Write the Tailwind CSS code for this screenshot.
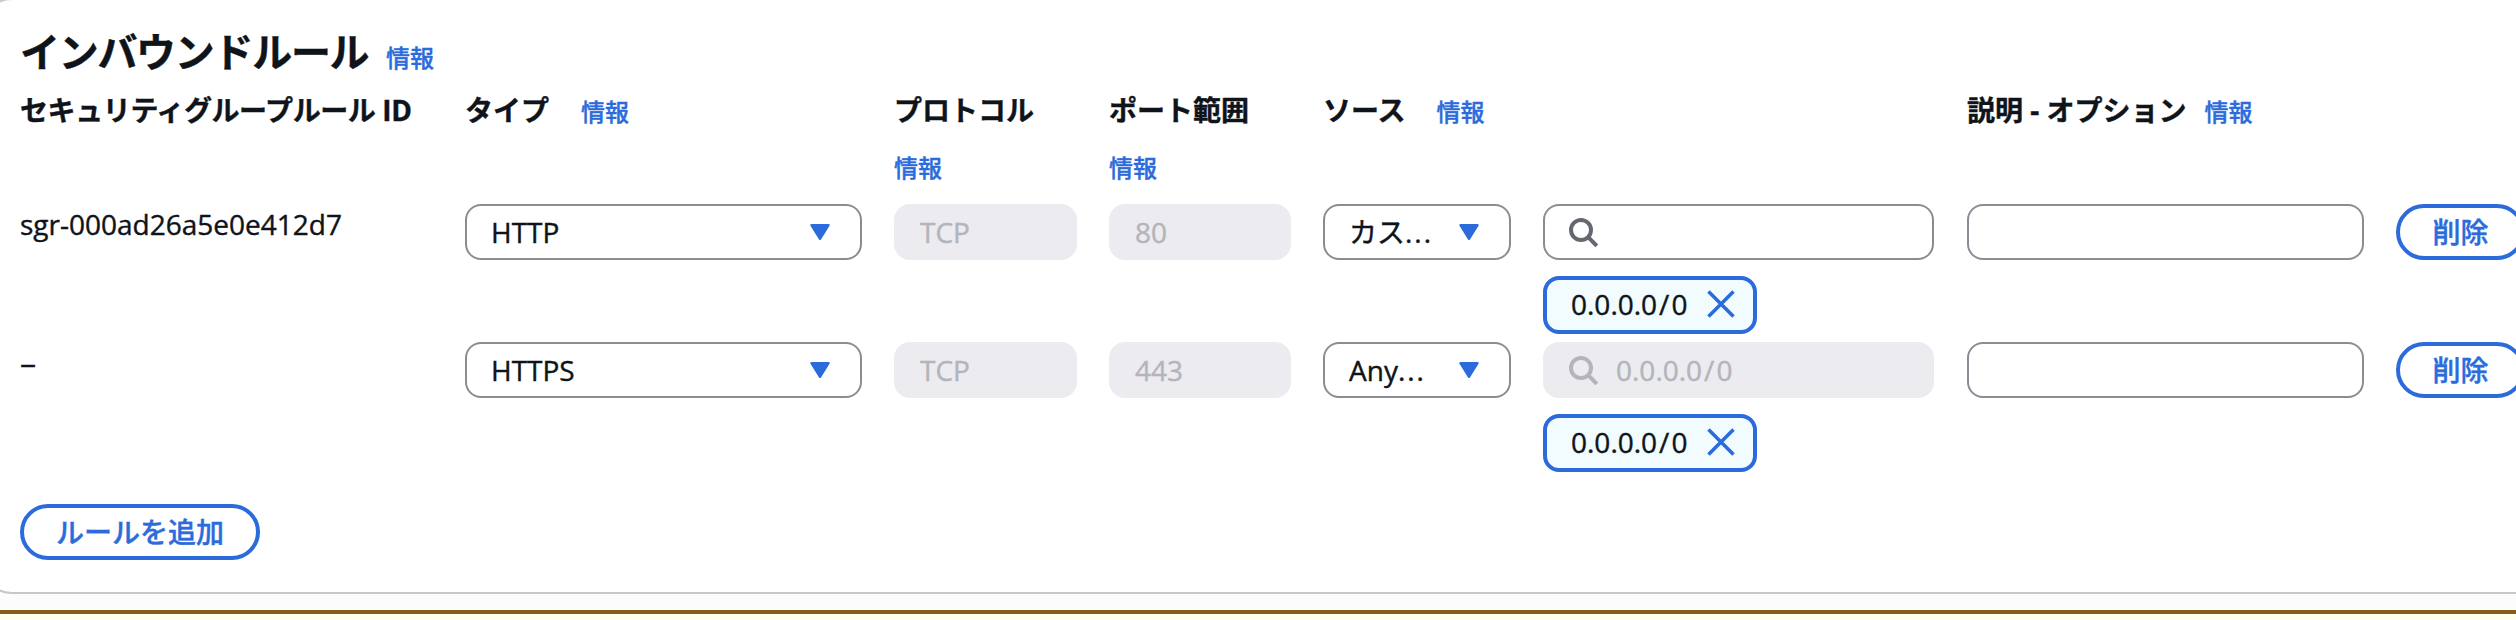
<!DOCTYPE html>
<html lang="ja">
<head>
<meta charset="utf-8">
<title>インバウンドルール</title>
<script src="https://cdn.jsdelivr.net/npm/@tailwindcss/browser@4"></script>
</head>
<body class="flex h-[620px] w-[2516px] flex-col overflow-hidden bg-[#fcfcfd] font-['Open_Sans','Noto_Sans_CJK_JP',sans-serif] text-[28px] leading-10 text-[#0f141a] [-webkit-text-stroke:0.4px]">
<svg class="hidden">
  <symbol id="caret" viewBox="0 0 20 16"><path d="M1.500 1.200h17L10 14.800z" fill="currentColor" stroke="currentColor" stroke-width="2.400" stroke-linejoin="round"/></symbol>
  <symbol id="search" viewBox="0 0 32 32"><circle cx="14" cy="14" r="10" fill="none" stroke="currentColor" stroke-width="4"/><path d="M21 21l8.800 8.800" stroke="currentColor" stroke-width="4"/></symbol>
  <symbol id="close" viewBox="0 0 28 28"><path d="M1.500 1.500l25 25M26.500 1.500l-25 25" stroke="currentColor" stroke-width="3.600"/></symbol>
</svg>
<main class="-ml-5 -mt-0.5 h-[596px] w-[2600px] shrink-0 rounded-[32px] border-2 border-[#c6c6cd] bg-white pl-[38px] pt-7">
  <header class="flex h-[50px] items-baseline gap-4">
    <h2 class="w-[350px] whitespace-nowrap text-[40px] font-bold leading-[48px] tracking-[-1.3px]">インバウンドルール</h2>
    <a class="text-2xl font-medium text-[#2b6bdb]">情報</a>
  </header>
  <div class="mt-[12px] grid h-[114px] grid-cols-[413px_397px_183px_182px_188px_392px_397px_129px] gap-8 whitespace-nowrap">
    <div class="font-bold tracking-[-0.4px]">セキュリティグループルール ID</div>
    <div class="flex items-baseline gap-8"><b>タイプ</b><a class="text-2xl font-medium text-[#2b6bdb]">情報</a></div>
    <div class="flex flex-col gap-[18px]"><b>プロトコル</b><a class="text-2xl leading-10 font-medium text-[#2b6bdb]">情報</a></div>
    <div class="flex flex-col gap-[18px]"><b>ポート範囲</b><a class="text-2xl leading-10 font-medium text-[#2b6bdb]">情報</a></div>
    <div class="flex items-baseline gap-[31px]"><b>ソース</b><a class="text-2xl font-medium text-[#2b6bdb]">情報</a></div>
    <div></div>
    <div class="flex items-baseline gap-[18px]"><b>説明 - オプション</b><a class="text-2xl font-medium text-[#2b6bdb]">情報</a></div>
  </div>
  <div class="grid h-[138px] grid-cols-[413px_397px_183px_182px_188px_392px_397px_129px] items-start gap-8 whitespace-nowrap">
    <div>sgr-000ad26a5e0e412d7</div>
    <div class="flex h-14 items-center justify-between rounded-2xl border-2 border-[#8c8c94] pl-6 pr-[30px]"><span>HTTP</span><svg class="h-4 w-5 text-[#2b6bdb]"><use href="#caret"/></svg></div>
    <div class="flex h-14 items-center rounded-2xl bg-[#ebebf0] pl-[26px] text-[#b4b4bb]">TCP</div>
    <div class="flex h-14 items-center rounded-2xl bg-[#ebebf0] pl-[26px] text-[#b4b4bb]">80</div>
    <div class="flex h-14 items-center justify-between rounded-2xl border-2 border-[#8c8c94] pl-6 pr-[30px]"><span>カス<span class="tracking-[2px]">...</span></span><svg class="h-4 w-5 text-[#2b6bdb]"><use href="#caret"/></svg></div>
    <div class="flex flex-col items-start gap-4">
      <div class="flex h-14 w-[391px] items-center rounded-2xl border-2 border-[#8c8c94] pl-[22px]"><svg class="size-8 text-[#656871]"><use href="#search"/></svg></div>
      <div class="flex h-[58px] w-[214px] items-center justify-between rounded-2xl border-4 border-[#2b6bdb] bg-[#f2fcff] pb-[3px] pl-6 pr-[18px]"><span>0.0.0.0<span class="mx-[2px]">/</span>0</span><svg class="size-7 text-[#2b6bdb]"><use href="#close"/></svg></div>
    </div>
    <div class="h-14 rounded-2xl border-2 border-[#8c8c94]"></div>
    <button class="flex h-14 items-center justify-center rounded-full border-4 border-[#2b6bdb] font-medium text-[#2b6bdb]">削除</button>
  </div>
  <div class="grid h-[162px] grid-cols-[413px_397px_183px_182px_188px_392px_397px_129px] items-start gap-8 whitespace-nowrap">
    <div><span class="inline-block origin-left scale-x-115">–</span></div>
    <div class="flex h-14 items-center justify-between rounded-2xl border-2 border-[#8c8c94] pl-6 pr-[30px]"><span>HTTPS</span><svg class="h-4 w-5 text-[#2b6bdb]"><use href="#caret"/></svg></div>
    <div class="flex h-14 items-center rounded-2xl bg-[#ebebf0] pl-[26px] text-[#b4b4bb]">TCP</div>
    <div class="flex h-14 items-center rounded-2xl bg-[#ebebf0] pl-[26px] text-[#b4b4bb]">443</div>
    <div class="flex h-14 items-center justify-between rounded-2xl border-2 border-[#8c8c94] pl-6 pr-[30px]"><span>Any<span class="tracking-[2px]">...</span></span><svg class="h-4 w-5 text-[#2b6bdb]"><use href="#caret"/></svg></div>
    <div class="flex flex-col items-start gap-4">
      <div class="flex h-14 w-[391px] items-center gap-[17px] rounded-2xl bg-[#ebebf0] pl-6 text-[#b4b4bb]"><svg class="size-8"><use href="#search"/></svg><span>0.0.0.0<span class="mx-[2px]">/</span>0</span></div>
      <div class="flex h-[58px] w-[214px] items-center justify-between rounded-2xl border-4 border-[#2b6bdb] bg-[#f2fcff] pb-[3px] pl-6 pr-[18px]"><span>0.0.0.0<span class="mx-[2px]">/</span>0</span><svg class="size-7 text-[#2b6bdb]"><use href="#close"/></svg></div>
    </div>
    <div class="h-14 rounded-2xl border-2 border-[#8c8c94]"></div>
    <button class="flex h-14 items-center justify-center rounded-full border-4 border-[#2b6bdb] font-medium text-[#2b6bdb]">削除</button>
  </div>
  <button class="flex h-14 w-60 items-center justify-center rounded-full border-4 border-[#2b6bdb] font-medium text-[#2b6bdb]">ルールを追加</button>
</main>
<div class="mt-4 h-6 shrink-0 border-t-4 border-[#855c1a] bg-[#fffef0]"></div>
</body>
</html>
